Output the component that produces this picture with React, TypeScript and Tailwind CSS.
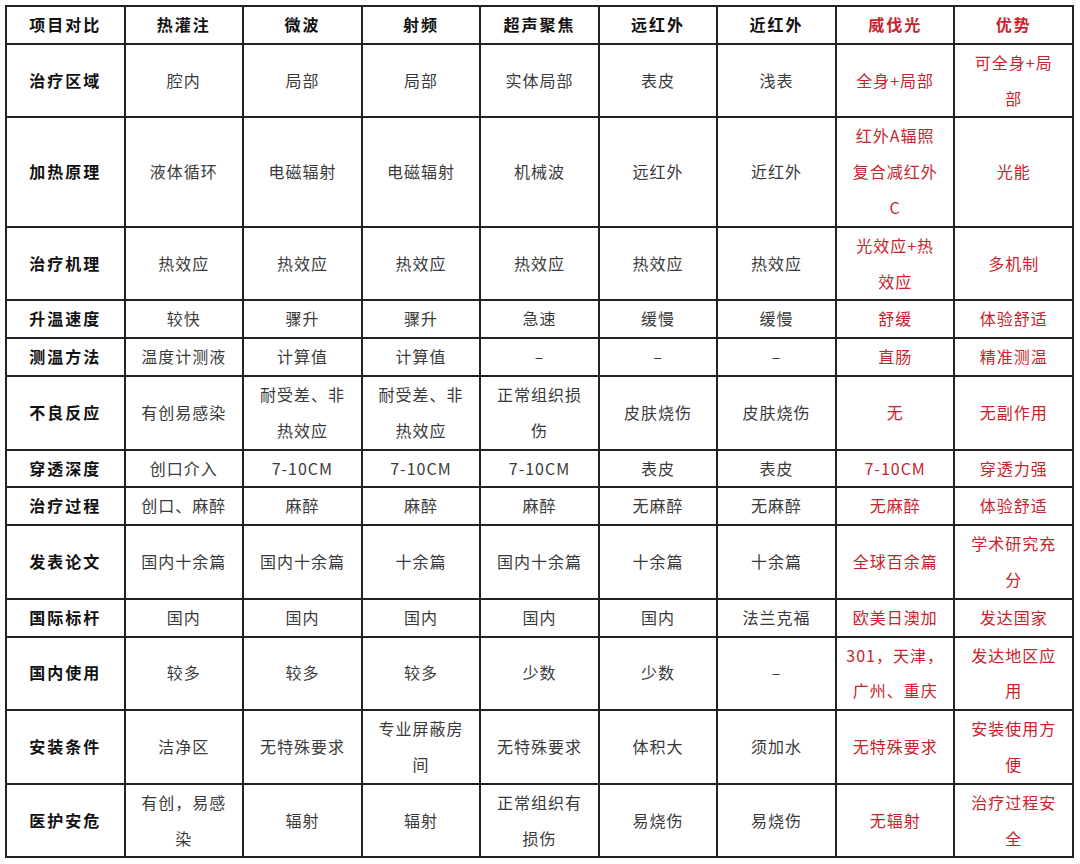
import { Fragment } from 'react'

const RED = 'text-[#c8232c]'

type Row = { label: string; cells: string[] }

const heads = ['热灌注', '微波', '射频', '超声聚焦', '远红外', '近红外']

const rows: Row[] = [
  { label: '治疗区域', cells: ['腔内', '局部', '局部', '实体局部', '表皮', '浅表', '全身+局部', '可全身+局\n部'] },
  { label: '加热原理', cells: ['液体循环', '电磁辐射', '电磁辐射', '机械波', '远红外', '近红外', '红外A辐照\n复合减红外\nC', '光能'] },
  { label: '治疗机理', cells: ['热效应', '热效应', '热效应', '热效应', '热效应', '热效应', '光效应+热\n效应', '多机制'] },
  { label: '升温速度', cells: ['较快', '骤升', '骤升', '急速', '缓慢', '缓慢', '舒缓', '体验舒适'] },
  { label: '测温方法', cells: ['温度计测液', '计算值', '计算值', '–', '–', '–', '直肠', '精准测温'] },
  { label: '不良反应', cells: ['有创易感染', '耐受差、非\n热效应', '耐受差、非\n热效应', '正常组织损\n伤', '皮肤烧伤', '皮肤烧伤', '无', '无副作用'] },
  { label: '穿透深度', cells: ['创口介入', '7-10CM', '7-10CM', '7-10CM', '表皮', '表皮', '7-10CM', '穿透力强'] },
  { label: '治疗过程', cells: ['创口、麻醉', '麻醉', '麻醉', '麻醉', '无麻醉', '无麻醉', '无麻醉', '体验舒适'] },
  { label: '发表论文', cells: ['国内十余篇', '国内十余篇', '十余篇', '国内十余篇', '十余篇', '十余篇', '全球百余篇', '学术研究充\n分'] },
  { label: '国际标杆', cells: ['国内', '国内', '国内', '国内', '国内', '法兰克福', '欧美日澳加', '发达国家'] },
  { label: '国内使用', cells: ['较多', '较多', '较多', '少数', '少数', '–', '301，天津，\n广州、重庆', '发达地区应\n用'] },
  { label: '安装条件', cells: ['洁净区', '无特殊要求', '专业屏蔽房\n间', '无特殊要求', '体积大', '须加水', '无特殊要求', '安装使用方\n便'] },
  { label: '医护安危', cells: ['有创，易感\n染', '辐射', '辐射', '正常组织有\n损伤', '易烧伤', '易烧伤', '无辐射', '治疗过程安\n全'] },
]

const cell = 'flex items-center justify-center bg-white text-center whitespace-pre-line leading-[35.8px]'
const head = `${cell} font-bold tracking-[2px]`

export default function App() {
  return (
    <div className="min-h-[864px] bg-white pl-[5px] pt-[5px]" style={{ fontFamily: '"Noto Sans CJK SC", "Noto Sans", sans-serif' }}>
      <div className="grid w-[1069px] grid-cols-9 gap-[2px] border-2 border-[#222] bg-[#222] text-[16px]">
        <div className={`${head} text-[#111]`}>项目对比</div>
        {heads.map((h) => <div key={h} className={`${head} text-[#111]`}>{h}</div>)}
        <div className={`${head} ${RED}`}>威伐光</div>
        <div className={`${head} ${RED}`}>优势</div>

        {rows.map((r) => (
          <Fragment key={r.label}>
            <div className={`${head} text-[#111]`}>{r.label}</div>
            {r.cells.map((c, i) => (
              <div key={i} className={`${cell} tracking-[1px] ${i >= 6 ? RED : 'text-[#3a3a3a]'}`}>{c}</div>
            ))}
          </Fragment>
        ))}
      </div>
    </div>
  )
}
